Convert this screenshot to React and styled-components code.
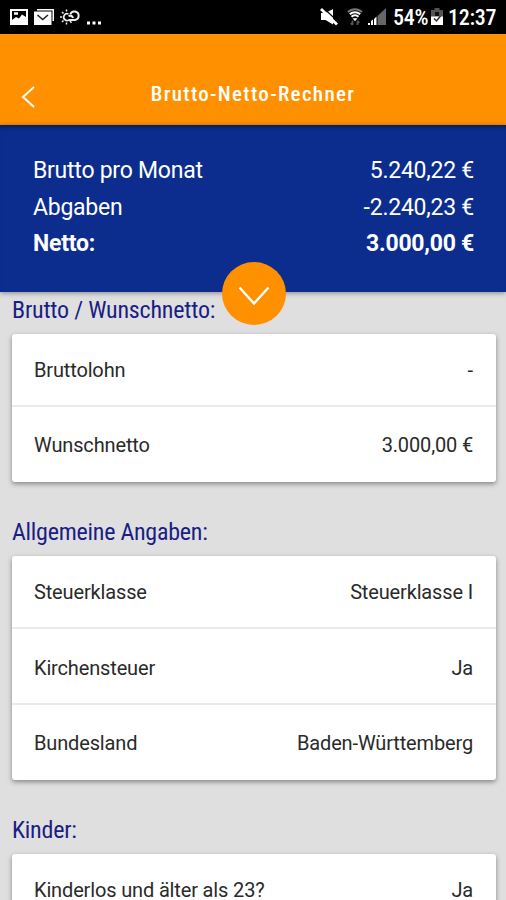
import React from 'react';
import styled, { createGlobalStyle } from 'styled-components';

const summary = [
  { label: 'Brutto pro Monat', value: '5.240,22 €' },
  { label: 'Abgaben', value: '-2.240,23 €' },
  { label: 'Netto:', value: '3.000,00 €', bold: true }
];

const sections = [
  {
    title: 'Brutto / Wunschnetto:',
    rows: [
      { label: 'Bruttolohn', value: '-' },
      { label: 'Wunschnetto', value: '3.000,00 €' }
    ]
  },
  {
    title: 'Allgemeine Angaben:',
    rows: [
      { label: 'Steuerklasse', value: 'Steuerklasse I' },
      { label: 'Kirchensteuer', value: 'Ja' },
      { label: 'Bundesland', value: 'Baden-Württemberg' }
    ]
  },
  {
    title: 'Kinder:',
    rows: [
      { label: 'Kinderlos und älter als 23?', value: 'Ja' }
    ]
  }
];

const StatusLeft = () => (
  <StatusIcons>
    <svg width="18" height="18" viewBox="0 0 18 18">
      <path fill="#fff" fillRule="evenodd" d="M0 1h18v16H0zM2 3v9l4-3 3 1.500 3-4 4 2.500V3z" />
      <path d="M4 5.500h4" stroke="#fff" strokeWidth="2.500" />
    </svg>
    <svg width="20" height="18" viewBox="0 0 20 18">
      <path fill="#fff" d="M3 1h17v12h-1.500V2.500H3zM1 3.500h16.500V17H0V3.500z" />
      <path d="M3.500 7l5.200 4.500L14 7" fill="none" stroke="#222" strokeWidth="1.600" />
    </svg>
    <svg width="20" height="18" viewBox="0 0 20 18" fill="none" stroke="#eee">
      <path strokeWidth="1.700" d="M8.500 6a3.400 3.400 0 1 0 1 5.500" />
      <path strokeWidth="2" d="M9 12h6a4.300 4.300 0 1 0-4.700-5.700M8.500 8c2.300-.8 4 .2 4.500 2" />
      <path strokeWidth="1.500" d="M6.500 1.500v2M2 4l1.500 1.500M0 9h2M2 14l1.500-1.500M6.500 14.500v2M10 13l1.500 1.800" />
    </svg>
    <svg width="16" height="18" viewBox="0 0 16 18" fill="#fff">
      <path d="M1 13.500h3v3H1zM6.500 13.500h3v3h-3zM12 13.500h3v3h-3z" />
    </svg>
  </StatusIcons>
);

const StatusRight = () => (
  <StatusInfo>
    <MuteIcon viewBox="0 0 18 18">
      <path fill="#fff" d="M1 5h4.500L13 1v15.500L5.500 12H1z" />
      <path stroke="#000" strokeWidth="1.200" d="M4 .5L18 13.500" />
      <path stroke="#fff" strokeWidth="2.800" d="M1 1l16 15.500" />
    </MuteIcon>
    <WifiIcon viewBox="0 0 16 18">
      <path d="M1 4a10 10 0 0 1 14 0" stroke="#777" strokeWidth="2" />
      <path d="M2.800 6.300a7.500 7.500 0 0 1 10.400 0M4.500 8.800a5 5 0 0 1 7 0" stroke="#fff" strokeWidth="2" />
      <path d="M5.500 10.300h5l-2.500 2.900z" fill="#fff" />
      <path d="M5.500 12.500V17M3.800 15l1.700 2M10.500 17v-4.500M12.200 15l-1.700-2" stroke="#555" strokeWidth="1.800" />
    </WifiIcon>
    <SignalIcon viewBox="0 0 18 18">
      <path fill="#666" d="M9.500 8L18 0v17H9.500z" />
      <path fill="#fff" d="M0 15h2v2H0zM3 13l2-1.500V17H3zM6 11l2.500-2.500V17H6z" />
    </SignalIcon>
    <Percent>54%</Percent>
    <BatteryIcon viewBox="0 0 12 18">
      <path fill="#555" d="M3.500 0h5v2H12v7H0V2h3.500z" />
      <path fill="#fff" d="M0 8.500h12V17H0z" />
      <path d="M3 10.500l2.500 2.500L9.500 8" fill="none" stroke="#333" strokeWidth="1.500" />
      <path d="M6 4v4" stroke="#111" strokeWidth="4" />
    </BatteryIcon>
    <Clock>12:37</Clock>
  </StatusInfo>
);

class App extends React.Component {
  render() {
    return (
      <Screen>
        <GlobalStyle />
        <StatusBar>
          <StatusLeft />
          <StatusRight />
        </StatusBar>
        <Header>
          <BackIcon viewBox="0 0 14 22">
            <path d="M13 1L2 11l11 10" />
          </BackIcon>
          <Title>Brutto-Netto-Rechner</Title>
        </Header>
        <Summary>
          {summary.map(item => (
            <SummaryRow key={item.label} $bold={item.bold}>
              <span>{item.label}</span>
              <span>{item.value}</span>
            </SummaryRow>
          ))}
          <ExpandButton aria-label="Details">
            <svg width="32" height="20" viewBox="0 0 32 20">
              <path d="M1.500 1.500L16 17.500l14.500-16" fill="none" stroke="#fff" strokeWidth="2.400" />
            </svg>
          </ExpandButton>
        </Summary>
        <Content>
          {sections.map(section => (
            <section key={section.title}>
              <SectionTitle>{section.title}</SectionTitle>
              <Card>
                {section.rows.map(row => (
                  <Row key={row.label}>
                    <span>{row.label}</span>
                    <span>{row.value}</span>
                  </Row>
                ))}
              </Card>
            </section>
          ))}
        </Content>
      </Screen>
    );
  }
}

export default App;

const GlobalStyle = createGlobalStyle`
body {
  margin: 0;
  overflow: hidden;
}

* {
  box-sizing: border-box;
}
`;

const Screen = styled.div`
width: 506px;
height: 900px;
display: flex;
flex-direction: column;
overflow: hidden;
background: #dfdfdf;
font-family: Roboto, 'Liberation Sans', sans-serif;
`;

const StatusBar = styled.div`
flex: none;
height: 34px;
padding: 0 10px;
display: flex;
justify-content: space-between;
align-items: center;
background: #000;
color: #fff;
`;

const StatusIcons = styled.div`
display: flex;
gap: 6px;
`;

const StatusInfo = styled.div`
display: flex;
align-items: center;
font-size: 22px;
font-weight: 500;
font-stretch: condensed;
letter-spacing: -0.3px;
line-height: 36px;
`;

const StatusIcon = styled.svg`
flex: none;
height: 18px;
fill: none;
`;

const MuteIcon = styled(StatusIcon)`
width: 18px;
margin-right: 9px;
`;

const WifiIcon = styled(StatusIcon)`
width: 16px;
margin-right: 5px;
`;

const SignalIcon = styled(StatusIcon)`
width: 18px;
margin-right: 7px;
`;

const BatteryIcon = styled(StatusIcon)`
width: 12px;
margin-right: 5px;
`;

const Percent = styled.span`
width: 38px;
padding-top: 2px;
white-space: nowrap;
`;

const Clock = styled.span`
width: 48px;
padding-top: 2px;
white-space: nowrap;
`;

const Header = styled.header`
flex: none;
height: 91px;
padding-top: 29px;
position: relative;
display: flex;
align-items: center;
justify-content: center;
background: #ff9100;
`;

const BackIcon = styled.svg`
position: absolute;
left: 21px;
top: 52px;
width: 14px;
height: 22px;
fill: none;
stroke: #fff;
stroke-width: 1.9;
`;

const Title = styled.h1`
margin: 0;
color: #fff;
font-size: 21px;
font-weight: 500;
font-stretch: condensed;
letter-spacing: 1.3px;
`;

const Summary = styled.section`
flex: none;
position: relative;
z-index: 1;
height: 167px;
padding: 28px 32px 0 33px;
background: #0c2d8e;
box-shadow: 0 1px 5px rgba(0, 0, 0, 0.4), inset 0 6px 5px -4px rgba(0, 0, 0, 0.4);
`;

const SummaryRow = styled.div`
display: flex;
justify-content: space-between;
height: 36.5px;
line-height: 36.5px;
color: #fff;
font-size: 23px;
font-weight: ${props => (props.$bold ? 700 : 400)};
letter-spacing: -0.25px;
`;

const ExpandButton = styled.button`
position: absolute;
left: 222px;
bottom: -33px;
width: 64px;
height: 63px;
padding: 5px 0 0;
display: flex;
align-items: center;
justify-content: center;
border: none;
border-radius: 50%;
background: #ff9100;
`;

const Content = styled.main`
flex: 1;
min-height: 0;
padding: 0 10px 0 12px;
`;

const SectionTitle = styled.h2`
margin: 0;
height: 74px;
padding-top: 34px;
color: #1a1d84;
font-size: 24px;
font-weight: 400;
font-stretch: condensed;
letter-spacing: -0.25px;
line-height: 32px;

section:first-child > & {
  height: 42px;
  padding-top: 2px;
  letter-spacing: -0.2px;
}
`;

const Card = styled.div`
border-radius: 3px;
background: #fff;
box-shadow: 0 2px 5px rgba(0, 0, 0, 0.4);
`;

const Row = styled.div`
height: 76px;
padding: 4px 23px 0 22px;
display: flex;
justify-content: space-between;
align-items: center;
border-bottom: 2px solid #ebebeb;
color: #2a2a2a;
font-size: 20px;
letter-spacing: -0.15px;

&:last-child {
  height: 75px;
  padding-top: 1px;
  border-bottom: none;
}

&:first-child {
  height: 73px;
  padding-top: 0;
  border-bottom: 2px solid #ebebeb;
}
`;
